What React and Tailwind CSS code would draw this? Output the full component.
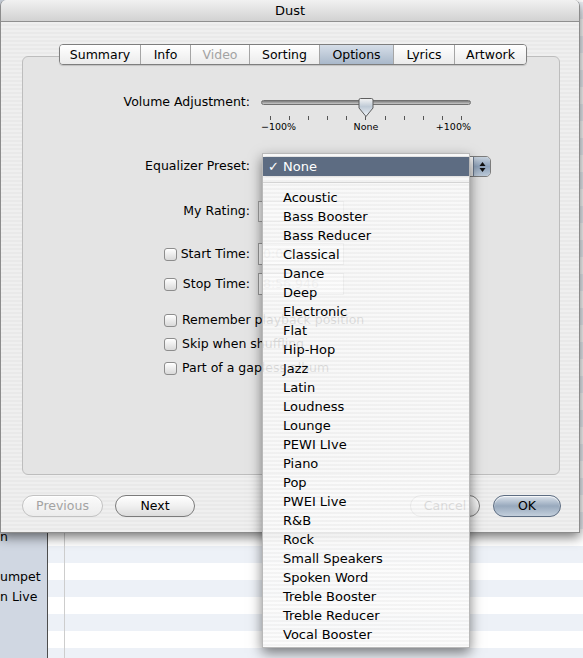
import React from 'react';

const presets = [
  'Acoustic', 'Bass Booster', 'Bass Reducer', 'Classical', 'Dance', 'Deep',
  'Electronic', 'Flat', 'Hip-Hop', 'Jazz', 'Latin', 'Loudness', 'Lounge',
  'PEWI LIve', 'Piano', 'Pop', 'PWEI Live', 'R&B', 'Rock', 'Small Speakers',
  'Spoken Word', 'Treble Booster', 'Treble Reducer', 'Vocal Booster',
];

const tabs = [
  { label: 'Summary', w: 'w-[80px]' },
  { label: 'Info', w: 'w-[50px]' },
  { label: 'Video', w: 'w-[59px]', disabled: true },
  { label: 'Sorting', w: 'w-[70px]' },
  { label: 'Options', w: 'w-[74px]', active: true },
  { label: 'Lyrics', w: 'w-[61px]' },
  { label: 'Artwork', w: 'w-[72px]' },
];

const rows = Array.from({ length: 39 }, (_, i) => i);

function Checkbox() {
  return (
    <div className="w-[13px] h-[13px] shrink-0 rounded-[3px] border border-[#8d8d8d] bg-gradient-to-b from-white to-[#d9d9d9] shadow-[inset_0_1px_0_#fff]" />
  );
}

function Button({ children, className = '', disabled }) {
  return (
    <div
      className={`h-[22px] rounded-full border flex items-center justify-center text-[12.5px] shadow-[inset_0_1px_1px_#fff] ${
        disabled
          ? 'border-[#c2c2c2] text-[#a3a3a3] bg-gradient-to-b from-[#fbfbfb] to-[#ececec]'
          : 'border-[#7b7b7b] text-black bg-gradient-to-b from-white via-[#f0f0f0] to-[#dcdcdc]'
      } ${className}`}
    >
      {children}
    </div>
  );
}

function Slider() {
  return (
    <div className="ml-[11px] w-[210px]">
      <div className="relative h-[16px] pt-[6px]">
        <div className="h-[5px] rounded-full border border-[#707070] bg-gradient-to-b from-[#7c7c7c] to-[#c9c9c9]" />
        <svg className="absolute left-[97px] top-[3px]" width="16" height="21" viewBox="0 0 16 21">
          <defs>
            <linearGradient id="thumb" x1="0" y1="0" x2="0" y2="1">
              <stop offset="0" stopColor="#f4f4f4" />
              <stop offset="0.45" stopColor="#bfcad6" />
              <stop offset="1" stopColor="#eef3f8" />
            </linearGradient>
          </defs>
          <path
            d="M2.5 1.5 H13.5 Q15 1.5 15 3 V11 L8 19.5 L1 11 V3 Q1 1.5 2.5 1.5 Z"
            fill="url(#thumb)"
            stroke="#5f5f5f"
            strokeWidth="1"
          />
        </svg>
      </div>
      <div className="mt-[6px] h-[4px] flex justify-between px-[9px]">
        {Array.from({ length: 11 }, (_, i) => (
          <div key={i} className="w-px h-full bg-[#555]" />
        ))}
      </div>
      <div className="mt-[1px] flex justify-between text-[9.5px] leading-[12px]">
        <span>−100%</span>
        <span>None</span>
        <span>+100%</span>
      </div>
    </div>
  );
}

// popup body sits under the open menu; only the stepper end shows
function PopupButton() {
  return (
    <div className="ml-[12px] w-[229px] h-[21px] flex rounded-[5px] border border-[#7c7c7c] bg-gradient-to-b from-white to-[#e6e6e6] overflow-hidden">
      <div className="flex-1" />
      <div className="w-[17px] h-full border-l border-[#6a7a90] bg-gradient-to-b from-[#c7d2de] via-[#8ea2ba] to-[#bccad9] flex items-center justify-center">
        <svg width="7" height="12" viewBox="0 0 7 12">
          <path d="M3.5 1 L6.5 5 H0.5 Z" fill="#111" />
          <path d="M3.5 11 L6.5 7 H0.5 Z" fill="#111" />
        </svg>
      </div>
    </div>
  );
}

function TimeRow({ label, value, className }) {
  return (
    <div className={`flex items-center h-[22px] ${className}`}>
      <div className="w-[227px] flex items-center pl-[141px]">
        <Checkbox />
        <span className="flex-1 text-right">{label}</span>
      </div>
      <div className="ml-[8px] w-[86px] h-[22px] border border-[#9c9c9c] bg-white text-[#b4b4b4] pl-[4px] leading-[20px]">
        {value}
      </div>
    </div>
  );
}

function CheckRow({ label, className }) {
  return (
    <div className={`flex items-center h-[18px] pl-[141px] ${className}`}>
      <Checkbox />
      <span className="ml-[5px]">{label}</span>
    </div>
  );
}

function PresetMenu() {
  return (
    <div className="absolute left-[262px] top-[153px] z-20 w-[208px] h-[495px] pt-[3px] border border-[#b9b9b9] bg-[repeating-linear-gradient(180deg,rgba(251,251,251,0.88)_0px,rgba(251,251,251,0.88)_2px,rgba(242,242,242,0.88)_2px,rgba(242,242,242,0.88)_4px)] shadow-[0_5px_12px_rgba(0,0,0,0.5)] text-[13px]">
      <div className="h-[19px] flex items-center bg-[#5d6c82] text-white">
        <span className="w-[20px] pl-[5px]">✓</span>
        <span>None</span>
      </div>
      <div className="h-[12px] flex items-center">
        <div className="w-full h-px bg-[#d4d4d4]" />
      </div>
      {presets.map((p) => (
        <div key={p} className="h-[19px] leading-[19px] pl-[20px] text-black">
          {p}
        </div>
      ))}
    </div>
  );
}

export default function App() {
  return (
    <div className="relative w-[583px] h-[658px] overflow-hidden bg-[#cfcfcf] font-['DejaVu_Sans',sans-serif] text-[12.5px] text-black">
      {/* library window behind the sheet */}
      <div className="flex h-full">
        <div className="w-[48px] shrink-0 border-r border-[#4d4d4d] bg-[#d0d7e2] pt-[527px] overflow-hidden whitespace-nowrap">
          <div className="h-[20px] leading-[20px]">n</div>
          <div className="h-[20px]" />
          <div className="h-[20px] leading-[20px]">umpet</div>
          <div className="h-[20px] leading-[20px]">n Live</div>
        </div>
        <div className="flex-1 pt-[2px] bg-white">
          {rows.map((i) => (
            <div key={i} className={`flex h-[17px] ${i % 2 === 0 ? 'bg-[#edf1f7]' : 'bg-white'}`}>
              <div className="w-[17px] border-r border-[#cdcdcd]" />
              <div className="flex-1" />
            </div>
          ))}
        </div>
      </div>

      {/* Get Info sheet */}
      <div className="absolute left-0 top-0 z-10 w-[580px] h-[533px] flex flex-col rounded-t-[6px] border-x border-b border-[#8c8c8c] shadow-[0_4px_12px_rgba(0,0,0,0.55)] overflow-hidden">
        <div className="h-[22px] shrink-0 border-b border-[#8f8f8f] bg-gradient-to-b from-[#f1f1f1] to-[#d2d2d2] text-center text-[13px] leading-[21px]">
          Dust
        </div>
        <div className="flex-1 flex flex-col pt-[22px] bg-[repeating-linear-gradient(180deg,#efefef_0px,#efefef_2px,#e9e9e9_2px,#e9e9e9_4px)]">
          <div className="relative z-10 -mb-[9px] pl-[58px] flex">
            <div className="flex h-[21px] rounded-[4px] border border-[#7e7e7e] overflow-hidden shadow-[0_1px_1px_rgba(0,0,0,0.15)]">
              {tabs.map((t, i) => (
                <div
                  key={t.label}
                  className={`${t.w} ${i > 0 ? 'border-l border-[#a5a5a5]' : ''} flex items-center justify-center leading-[19px] ${
                    t.active
                      ? 'bg-gradient-to-b from-[#d6dee8] to-[#a9b8ca]'
                      : 'bg-gradient-to-b from-white to-[#ebebeb]'
                  } ${t.disabled ? 'text-[#a3a3a3]' : 'text-black'}`}
                >
                  {t.label}
                </div>
              ))}
            </div>
          </div>

          <div className="ml-[21px] w-[538px] h-[419px] shrink-0 rounded-[6px] border border-[#bdbdbd] bg-[#e4e4e4] pt-[37px] flex flex-col">
            <div className="flex">
              <div className="w-[227px] h-[16px] leading-[16px] text-right">Volume Adjustment:</div>
              <Slider />
            </div>

            <div className="mt-[23px] h-[21px] flex items-center">
              <div className="w-[227px] text-right">Equalizer Preset:</div>
              <PopupButton />
            </div>

            <div className="mt-[24px] h-[21px] flex items-center">
              <div className="w-[227px] text-right">My Rating:</div>
              <div className="ml-[8px] w-[86px] h-[21px] border border-[#a3a3a3] bg-[#f3f3f3]" />
            </div>

            <TimeRow className="mt-[21px]" label="Start Time:" value="0:00" />
            <TimeRow className="mt-[8px]" label="Stop Time:" value="8:56.946" />

            <CheckRow className="mt-[16px]" label="Remember playback position" />
            <CheckRow className="mt-[6px]" label="Skip when shuffling" />
            <CheckRow className="mt-[6px]" label="Part of a gapless album" />
          </div>

          <div className="mt-[20px] flex">
            <Button disabled className="ml-[21px] w-[81px]">Previous</Button>
            <Button className="ml-[12px] w-[80px]">Next</Button>
            <Button className="ml-[215px] w-[70px]">Cancel</Button>
            <div className="ml-[13px] w-[68px] h-[22px] rounded-full border border-[#5d6d82] bg-gradient-to-b from-[#dde4ec] via-[#98a9bd] to-[#c3cfdc] shadow-[inset_0_1px_1px_rgba(255,255,255,0.8)] flex items-center justify-center text-[12.5px]">
              OK
            </div>
          </div>
        </div>
      </div>

      <PresetMenu />
    </div>
  );
}
